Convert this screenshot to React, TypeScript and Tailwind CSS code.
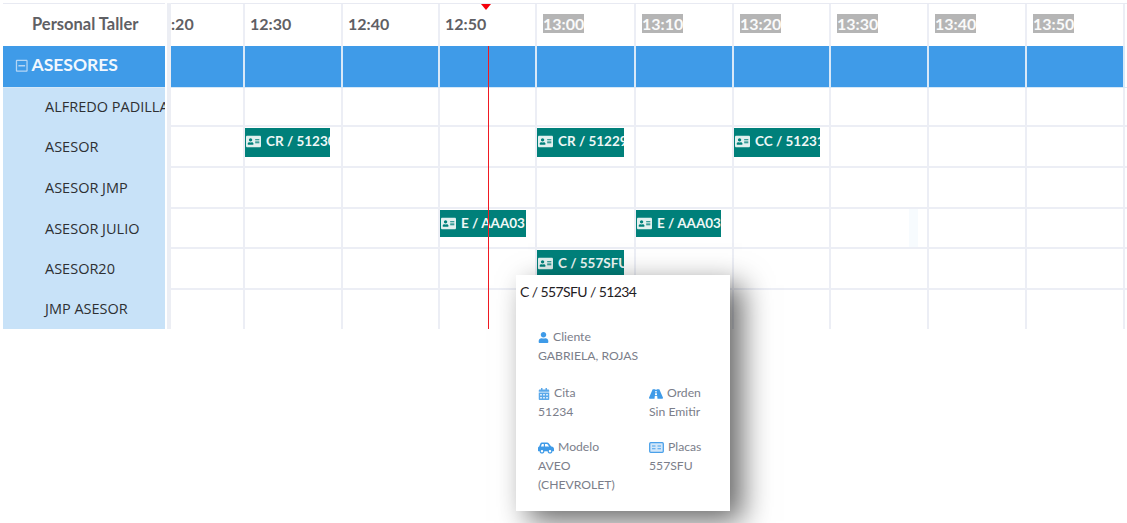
import { FaAddressCard, FaCalendarAlt, FaCarSide, FaRegMinusSquare, FaRoad, FaUser } from "react-icons/fa";

const GRID = "grid grid-cols-[74px_98px_97px_97px_99px_98px_97px_98px_98px_98px]";

const times = [":20", "12:30", "12:40", "12:50", "13:00", "13:10", "13:20", "13:30", "13:40", "13:50"];

interface EventInfo {
  col: number;
  label: string;
  width: string;
}

interface RowInfo {
  name: string;
  height: string;
  eventHeight?: string;
  events?: EventInfo[];
}

const rows: RowInfo[] = [
  { name: "ALFREDO PADILLA", height: "h-[39px]" },
  {
    name: "ASESOR",
    height: "h-[41px]",
    eventHeight: "h-[29px]",
    events: [
      { col: 1, label: "CR / 51230", width: "w-[85px]" },
      { col: 4, label: "CR / 51229", width: "w-[87px]" },
      { col: 6, label: "CC / 51231", width: "w-[86px]" },
    ],
  },
  { name: "ASESOR JMP", height: "h-[41px]" },
  {
    name: "ASESOR JULIO",
    height: "h-[40px]",
    eventHeight: "h-[27px]",
    events: [
      { col: 3, label: "E / AAA03", width: "w-[86px]" },
      { col: 5, label: "E / AAA03", width: "w-[85px]" },
    ],
  },
  {
    name: "ASESOR20",
    height: "h-[41px]",
    eventHeight: "h-[29px]",
    events: [{ col: 4, label: "C / 557SFU", width: "w-[87px]" }],
  },
  { name: "JMP ASESOR", height: "h-[39px]" },
];

function TimeEvent({ label, width, height }: { label: string; width: string; height?: string }) {
  return (
    <div
      className={`flex ${height} ${width} items-start overflow-hidden whitespace-nowrap bg-[#00807a] pl-[1px] pt-[4px] text-[13.5px] font-bold leading-[18px] text-[#eef7f6]`}
    >
      <FaAddressCard className="mr-[5px] mt-[2px] shrink-0 text-[15px] text-[#e2f0ef]" />
      {label}
    </div>
  );
}

function PlateIcon() {
  return (
    <svg viewBox="0 0 15 11" className="h-[11px] w-[15px] shrink-0">
      <rect x="0.7" y="0.7" width="13.6" height="9.6" rx="1" fill="#d3e7f9" stroke="#4ba1ea" strokeWidth="1.3" />
      <path d="M3 4h3.5M3 6.8h3.5M8.5 4H12M8.5 6.8H12" stroke="#4ba1ea" strokeWidth="1.1" />
    </svg>
  );
}

function Detail({
  icon,
  title,
  children,
}: {
  icon: React.ReactNode;
  title: string;
  children: React.ReactNode;
}) {
  return (
    <div>
      <div className="flex h-[19px] items-center gap-[4px]">
        {icon}
        <span>{title}</span>
      </div>
      <div className="-mt-[1px] leading-[19px]">{children}</div>
    </div>
  );
}

export default function App() {
  return (
    <div className="relative h-[523px] w-[1127px] overflow-hidden bg-white font-['Lato',sans-serif]">
      <div className="flex pl-[3px] pt-[3px]">
        <div className="w-[162px] shrink-0 border-t border-[#e8eaf2]">
          <div className="flex h-[42px] items-center pb-[1px] pl-[29px] text-[16.5px] font-bold text-[#5f6064]">
            Personal Taller
          </div>
          <div className="flex h-[42px] items-center gap-[3px] border-b border-[#d5e8f8] bg-[#3f9be8] pb-[2px] pl-[12px] text-[17.5px] font-bold text-[#f2f8fe]">
            <FaRegMinusSquare className="text-[13.5px] text-[#b5d6f5]" />
            ASESORES
          </div>
          {rows.map((row) => (
            <div
              key={row.name}
              className={`${row.height} flex items-center overflow-hidden whitespace-nowrap bg-[#c8e2f8] pb-[1px] pl-[42px] font-['Open_Sans',sans-serif] text-[14.5px] text-[#2e3033]`}
            >
              {row.name}
            </div>
          ))}
        </div>

        <div className="ml-[2px] w-[4px] shrink-0 bg-[#eceef4]" />

        <div className="w-[956px] shrink-0 border-t border-[#e8eaf2]">
          <div className={`${GRID} h-[42px]`}>
            {times.map((time, i) => (
              <div key={time} className="flex items-center border-r-2 border-[#eceef5] pb-[3px] text-[16px] font-bold text-[#5f6064]">
                {i < 4 ? (
                  <span className={i === 0 ? "" : "pl-[5px]"}>{time}</span>
                ) : (
                  <span className="ml-[6px] bg-[#b5b5b5] leading-[19px] text-[#fafafa]">{time}</span>
                )}
              </div>
            ))}
          </div>
          <div className={`${GRID} h-[42px] border-b border-[#d5e8f8]`}>
            {times.map((time) => (
              <div key={time} className="border-r-2 border-[#d9e9f8] bg-[#3f9be8]" />
            ))}
          </div>
          {rows.map((row) => (
            <div key={row.name} className={`${GRID} ${row.height} border-b-2 border-[#eceef5] last:border-b-0`}>
              {times.map((time, col) => {
                const event = row.events?.find((e) => e.col === col);
                return (
                  <div key={time} className="border-r-2 border-[#eceef5] pt-[1px]">
                    {event && <TimeEvent label={event.label} width={event.width} height={row.eventHeight} />}
                  </div>
                );
              })}
            </div>
          ))}
        </div>
      </div>

      {/* now marker */}
      <div className="absolute left-[481px] top-[4px] h-0 w-0 border-x-[5px] border-t-[6px] border-x-transparent border-t-[#f5000a]" />
      <div className="absolute left-[488px] top-[46px] h-[283px] w-[1px] bg-[#f01a22]" />

      {/* faint drag ghost */}
      <div className="absolute left-[909px] top-[209px] h-[38px] w-[9px] bg-[#f7fbfe]" />

      {/* tooltip */}
      <div className="absolute left-[516px] top-[275px] h-[236px] w-[214px] bg-white pl-[4px] pt-[8px] shadow-[12px_10px_28px_rgba(0,0,0,0.6)]">
        <div className="text-[14px] leading-[18px] tracking-[-0.6px] text-[#1f2023]">C / 557SFU / 51234</div>
        <div className="ml-[18px] mt-[27px] text-[12.2px] text-[#7b7e8a]">
          <Detail icon={<FaUser className="text-[11px] text-[#3f9be8]" />} title="Cliente">
            GABRIELA, ROJAS
          </Detail>
          <div className="mt-[19px] grid grid-cols-[111px_1fr] gap-y-[17px]">
            <Detail icon={<FaCalendarAlt className="text-[12px] text-[#5aa8ea]" />} title="Cita">
              51234
            </Detail>
            <Detail icon={<FaRoad className="text-[14px] text-[#3f9be8]" />} title="Orden">
              Sin Emitir
            </Detail>
            <Detail icon={<FaCarSide className="text-[16px] text-[#3f9be8]" />} title="Modelo">
              AVEO
              <br />
              (CHEVROLET)
            </Detail>
            <Detail icon={<PlateIcon />} title="Placas">
              557SFU
            </Detail>
          </div>
        </div>
      </div>
    </div>
  );
}
